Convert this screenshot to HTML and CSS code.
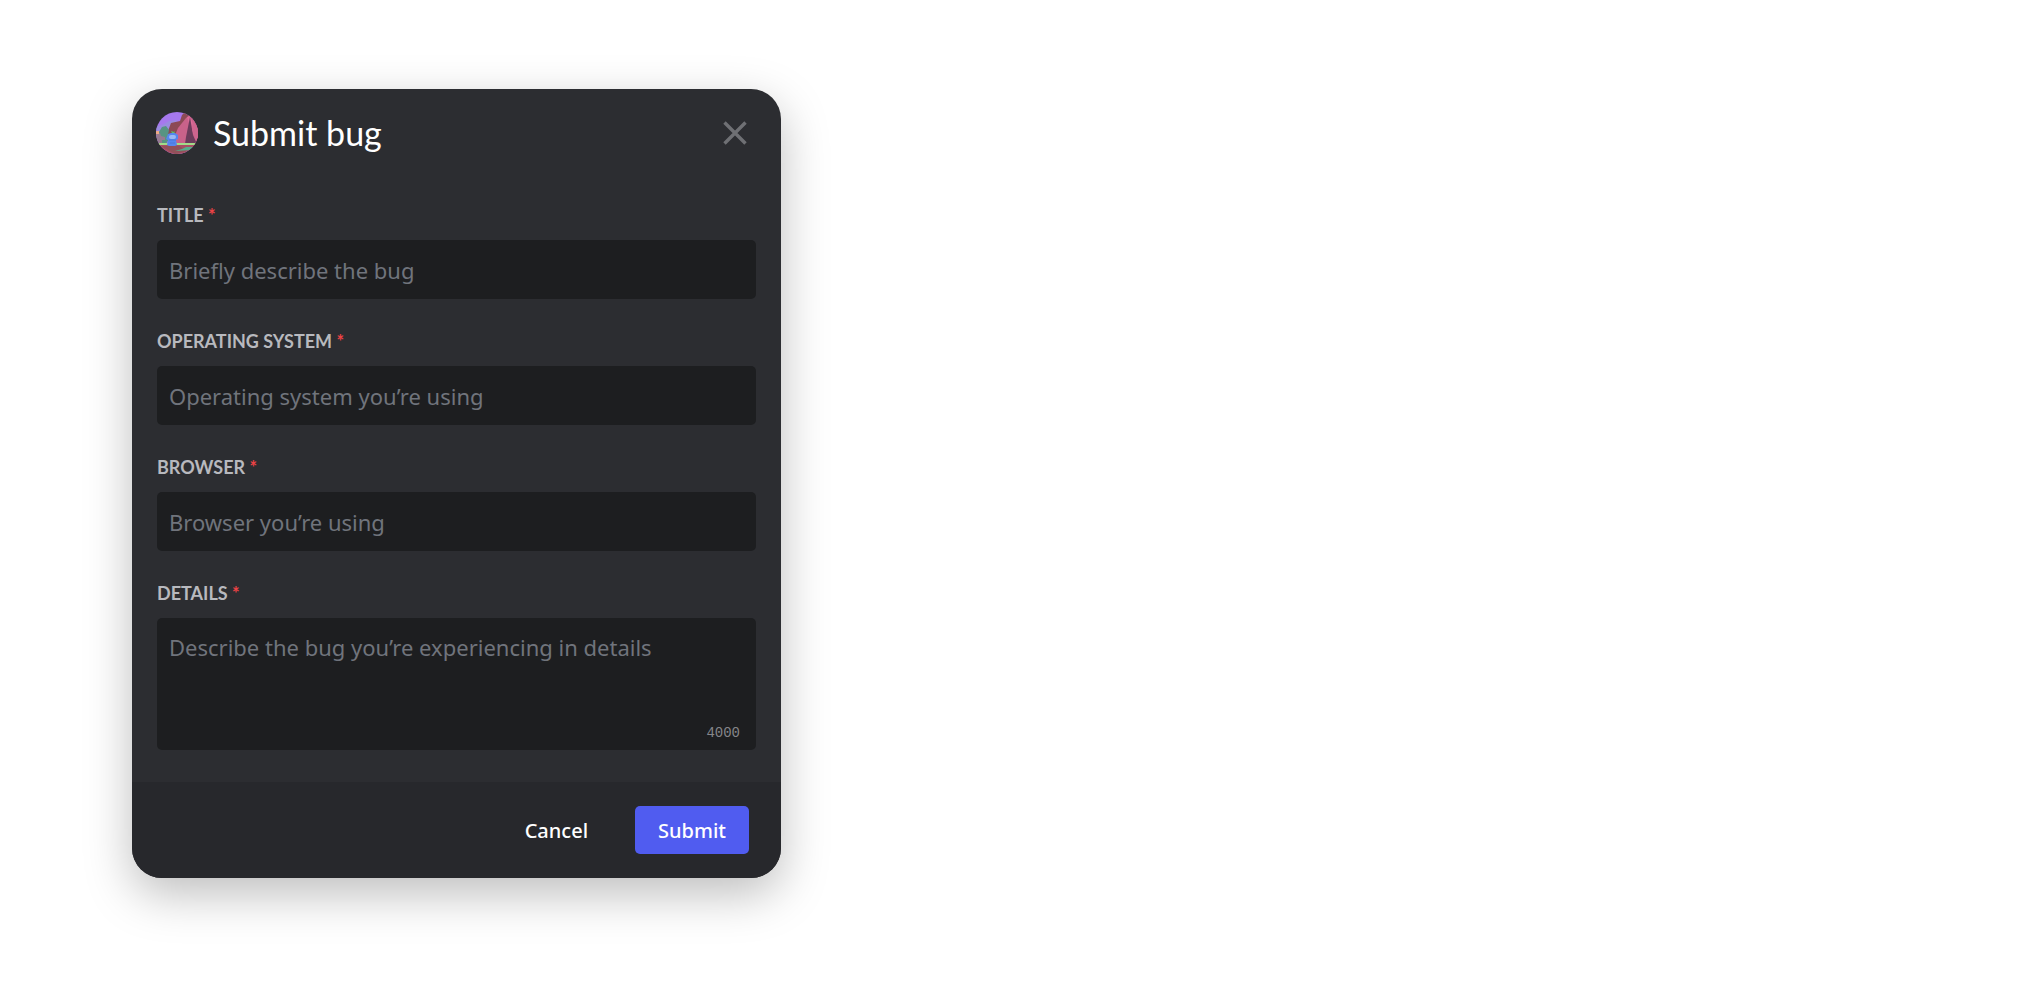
FILE: index.html
```html
<!DOCTYPE html>
<html lang="en">
<head>
  <meta charset="UTF-8">
  <meta name="viewport" content="width=device-width, initial-scale=1.0">
  <title>Submit bug</title>
  <link rel="stylesheet" href="styles.css">
</head>
<body>

<form class="modal">
  <div class="modal-header">
    <svg class="avatar" viewBox="0 0 42 42" aria-hidden="true">
      <clipPath id="avatarClip"><circle cx="21" cy="21" r="21"/></clipPath>
      <g clip-path="url(#avatarClip)">
        <rect width="42" height="42" fill="#a678ee"/>
        <path d="M0 15l8-3 5-3 8-1-5 12-16 4z" fill="#9a8be0"/>
        <path d="M12 33V19l3-8 9-2 2-6 3-3h13v34z" fill="#8c4a55"/>
        <path d="M15 33l7-17 8-10 4-3 4 3 4 10v17z" fill="#c9628a"/>
        <path d="M31 5l3-1 8 20v3l-6-7z" fill="#dc6d98"/>
        <path d="M34 5l-4 20-1 7h12l-4-9z" fill="#6b3c5b"/>
        <path d="M36 17l3 9 3 5V16l-5-8z" fill="#ce648e"/>
        <path d="M3 20l3-5 4-1 3 4-1 5 1 4-3 5H3z" fill="#579482"/>
        <path d="M0 21h4l1 3 4 1v3H6v5H0z" fill="#967b90"/>
        <path d="M0 19h3v3H0z" fill="#efaa86"/>
        <rect y="31" width="42" height="11" fill="#a84f64"/>
        <path d="M1 31h40v2H1z" fill="#a1dc88"/>
        <path d="M5 34h18l8 5-12 3z" fill="#91515a"/>
        <path d="M19 39l7-2 4-2h10l-4 3z" fill="#55ae8a"/>
        <path d="M16 21l-1-2 3 1 1-1-1 3z" fill="#58c765"/>
        <path d="M12 22l3-1h4l3 2v4l-2 1 1 5-2 1h-6l-2-1 1-5-2-1z" fill="#5686ef"/>
        <rect x="13" y="23" width="7" height="4" rx="2" fill="#9bb9f4"/>
        <path d="M13 28h7M14 31h5" stroke="#4a78dc"/>
      </g>
    </svg>
    <h1 class="modal-title">Submit bug</h1>
    <button type="button" class="close-button" aria-label="Close">
      <svg class="close-icon" viewBox="0 0 24 24" aria-hidden="true">
        <path d="M1.5 1.5l21 21M22.5 1.5l-21 21" stroke="currentColor" stroke-width="3.4"/>
      </svg>
    </button>
  </div>

  <div class="modal-body">
    <div class="field">
      <label for="title">Title <span class="required">*</span></label>
      <input type="text" id="title" placeholder="Briefly describe the bug">
    </div>
    <div class="field">
      <label for="system">Operating system <span class="required">*</span></label>
      <input type="text" id="system" placeholder="Operating system you’re using">
    </div>
    <div class="field">
      <label for="browser">Browser <span class="required">*</span></label>
      <input type="text" id="browser" placeholder="Browser you’re using">
    </div>
    <div class="field">
      <label for="details">Details <span class="required">*</span></label>
      <div class="textarea-wrap">
        <textarea id="details" maxlength="4000" placeholder="Describe the bug you’re experiencing in details"></textarea>
        <span class="counter">4000</span>
      </div>
    </div>
  </div>

  <div class="modal-footer">
    <button type="button" class="button button-link">Cancel</button>
    <button type="submit" class="button button-primary">Submit</button>
  </div>
</form>

</body>
</html>
```
FILE: styles.css
```css
* {
  box-sizing: border-box;
}
body {
  margin: 0;
  padding: 89px 132px;
  background-color: #fff;
  font-family: Lato, sans-serif;
}
input, textarea, button {
  font-family: "Noto Sans", sans-serif;
}
.modal {
  width: 100%;
  max-width: 649px;
  border-radius: 30px;
  background-color: #2c2d31;
  box-shadow: 0 16px 48px rgba(0,0,0,0.26);
  overflow: hidden;
}
.modal-header {
  display: flex;
  align-items: center;
  gap: 15px;
  padding: 23px 34px 0 24px;
}
.avatar {
  width: 42px;
  height: 42px;
}
.modal-title {
  flex: 1;
  margin: 0;
  color: #fff;
  font-size: 34px;
  font-weight: 400;
  line-height: 42px;
}
.close-button {
  display: flex;
  padding: 0;
  border: none;
  background: none;
  color: #6f7074;
  cursor: pointer;
}
.close-icon {
  width: 24px;
  height: 24px;
}
.modal-body {
  display: flex;
  flex-direction: column;
  gap: 30px;
  padding: 49px 25px 32px;
}
.field {
  display: flex;
  flex-direction: column;
  gap: 13px;
}
label {
  color: #b8b9be;
  font-size: 18px;
  font-weight: 700;
  line-height: 24px;
  text-transform: uppercase;
}
.required {
  color: #ed4245;
}
input, textarea {
  display: block;
  width: 100%;
  border: none;
  border-radius: 5px;
  background-color: #1d1e20;
  color: #dbdee1;
  font-size: 22px;
  line-height: 32px;
}
input {
  height: 59px;
  padding: 0 12px;
}
textarea {
  height: 132px;
  padding: 13px 12px;
  resize: none;
}
input::placeholder, textarea::placeholder {
  color: #70747c;
  opacity: 1;
}
.textarea-wrap {
  position: relative;
}
.counter {
  position: absolute;
  right: 16px;
  bottom: 9px;
  color: #85868a;
  font-family: "Liberation Mono", monospace;
  font-size: 14px;
  line-height: 16px;
}
.modal-footer {
  display: flex;
  justify-content: flex-end;
  gap: 24px;
  padding: 24px 32px;
  background-color: #27282c;
}
.button {
  height: 48px;
  padding: 0 23px;
  border: none;
  border-radius: 5px;
  color: #fff;
  font-size: 20px;
  font-weight: 500;
  cursor: pointer;
}
.button-link {
  background: none;
}
.button-primary {
  background-color: #505cf0;
}
```
